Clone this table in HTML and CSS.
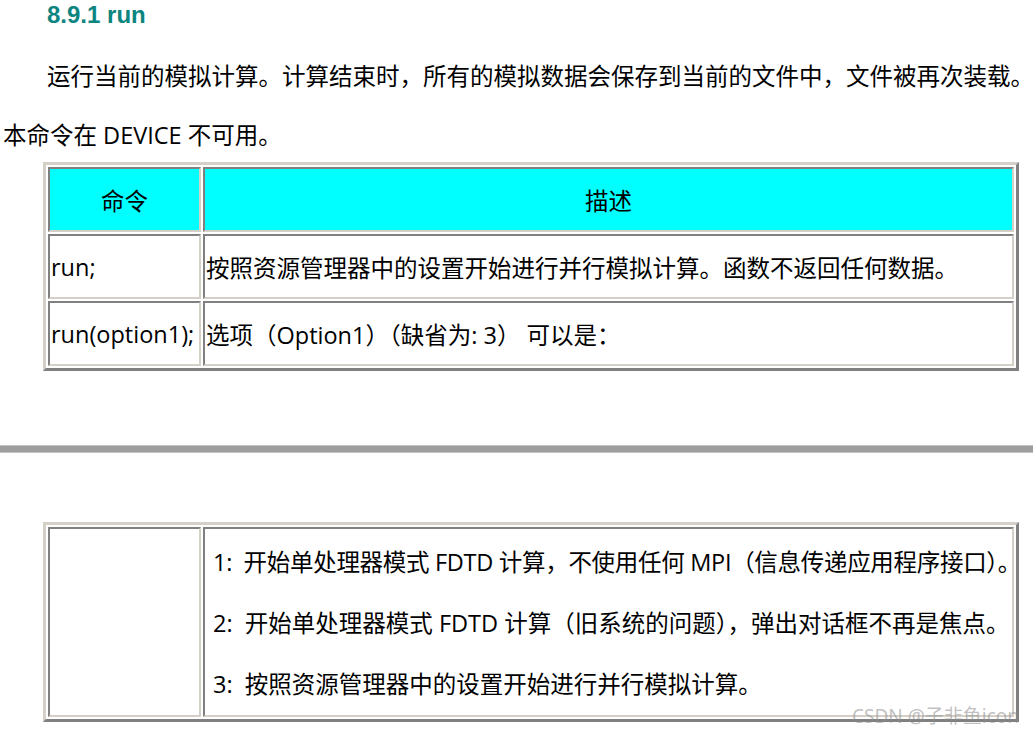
FILE: index.html
```html
<!DOCTYPE html>
<html lang="zh-CN">
<head>
<meta charset="utf-8">
<title>8.9.1 run</title>
<link rel="stylesheet" href="styles.css">
</head>
<body>
<div class="page">
  <h4 class="sec-title">8.9.1 run</h4>
  <p class="para indent">运行当前的模拟计算。计算结束时，所有的模拟数据会保存到当前的文件中，文件被再次装载。</p>
  <p class="para">本命令在 DEVICE 不可用。</p>

  <table class="cmd-table">
    <colgroup><col class="c1"><col class="c2"></colgroup>
    <tr class="head-row">
      <td class="center">命令</td>
      <td class="center">描述</td>
    </tr>
    <tr class="row">
      <td>run;</td>
      <td>按照资源管理器中的设置开始进行并行模拟计算。函数不返回任何数据。</td>
    </tr>
    <tr class="row">
      <td>run(option1);</td>
      <td>选项（Option1）（缺省为: 3） 可以是：</td>
    </tr>
  </table>

  <div class="rule"></div>

  <table class="cmd-table opts">
    <colgroup><col class="c1"><col class="c2"></colgroup>
    <tr>
      <td></td>
      <td class="opt-cell">
        <div class="opt-line tight">1:&nbsp; 开始单处理器模式 FDTD 计算，不使用任何 MPI（信息传递应用程序接口）。</div>
        <div class="opt-line">2:&nbsp; 开始单处理器模式 FDTD 计算（旧系统的问题），弹出对话框不再是焦点。</div>
        <div class="opt-line">3:&nbsp; 按照资源管理器中的设置开始进行并行模拟计算。</div>
      </td>
    </tr>
  </table>

  <div class="watermark">CSDN @子非鱼icon</div>
</div>
</body>
</html>
```
FILE: styles.css
```css
html, body {
  margin: 0;
  padding: 0;
  background: #ffffff;
}

body {
  font-family: "Open Sans", "Noto Sans CJK SC", sans-serif;
  color: #000;
  font-size: 23.5px;
}

.page {
  position: relative;
  width: 1033px;
  height: 735px;
  padding-left: 3px;
  box-sizing: border-box;
  overflow: hidden;
}

.sec-title {
  margin: 0 0 0 44px;
  height: 30px;
  line-height: 30px;
  font-size: 24px;
  font-weight: bold;
  color: #0b8580;
  font-family: "Liberation Sans", "Noto Sans", sans-serif;
}

.para {
  margin: 0;
  height: 30px;
  line-height: 30px;
  white-space: nowrap;
}

.indent {
  margin-top: 31px;
  text-indent: 44px;
}

.indent + .para {
  margin-top: 29px;
}

.cmd-table {
  margin: 12px 0 0 40px;
  width: 976px;
  table-layout: fixed;
  border-collapse: separate;
  border-spacing: 2px;
  border-style: solid;
  border-width: 3px;
  border-color: #d4d0c8 #808080 #808080 #d4d0c8;
}

.cmd-table .c1 { width: 153px; }

.cmd-table td {
  border-style: solid;
  border-width: 2px;
  border-color: #808080 #d4d0c8 #d4d0c8 #808080;
  padding: 0 1px;
  vertical-align: middle;
  white-space: nowrap;
  overflow: visible;
}

.head-row td {
  background: #00ffff;
  height: 61px;
}

.row td {
  height: 61px;
}

.center {
  text-align: center;
}

.rule {
  margin-top: 74px;
  margin-left: -3px;
  height: 6px;
  background: #9e9e9e;
  border-top: 1px solid #c4c4c4;
  border-bottom: 1px solid #c4c4c4;
}

.opts {
  margin-top: 69px;
}

.opt-cell {
  padding: 3px 0 0 8px !important;
}

.opt-line {
  height: 61px;
  line-height: 61px;
}

.tight {
  letter-spacing: -0.3px;
}

.watermark {
  position: absolute;
  right: 14px;
  top: 703px;
  font-size: 19px;
  line-height: 26px;
  color: rgba(140, 140, 140, 0.55);
  font-family: "Noto Sans", "Noto Sans CJK SC", sans-serif;
}
```
